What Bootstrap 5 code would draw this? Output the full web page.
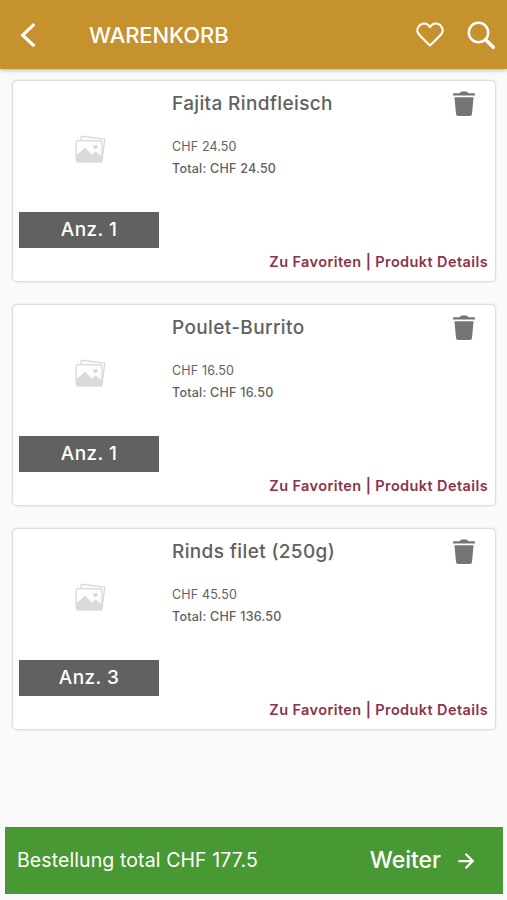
<!DOCTYPE html>
<html lang="de">
<head>
<meta charset="utf-8">
<meta name="viewport" content="width=device-width, initial-scale=1">
<title>Warenkorb</title>
<link href="https://cdn.jsdelivr.net/npm/bootstrap@5.3.0/dist/css/bootstrap.min.css" rel="stylesheet">
<style>
body{font-family:Inter,"Liberation Sans",sans-serif;background:#fafafa;color:#616161;height:900px;overflow:hidden}
.topbar{height:69px;background:#c5922e;box-shadow:0 1px 4px rgba(0,0,0,.32);padding:1px 11px 0 20px;flex:none}
.topbar h1{font-size:22px;font-weight:500;line-height:30px;letter-spacing:-.08px;margin-left:53px}
.items{padding:11px 11px 0 12px;gap:22px}
.item{height:202px;border:1px solid #dedede;border-radius:5px;box-shadow:0 0 2px rgba(0,0,0,.14);padding:7px 7px 7px 6px}
.thumb{width:140px;margin-right:13px}
.photo{height:124px;padding:0 0 2px 2px}
.qty{height:36px;background:#616161;font-size:19px;font-weight:500;line-height:36px;letter-spacing:.4px}
.name{font-size:19px;font-weight:500;line-height:28px;letter-spacing:.36px;padding-top:2px}
.price{font-size:12.5px;line-height:22px;letter-spacing:.15px;margin-top:18px}
.sum{font-size:12.5px;line-height:22px;font-weight:500;letter-spacing:.24px}
.actions{font-size:14.5px;line-height:20px;font-weight:600;letter-spacing:.4px;color:#8b3347;margin-bottom:2px}
.bin{margin:3px 13px 1px 0}
.total{height:67px;background:#489833;margin:0 4px 6px 5px;padding:0 28px 0 12px;flex:none}
.total-label{font-size:19.5px;letter-spacing:.1px;padding-top:1px}
.next{font-size:23px;font-weight:500;gap:16px}
</style>
<script src="https://cdn.jsdelivr.net/npm/bootstrap@5.3.0/dist/js/bootstrap.bundle.min.js"></script>
</head>
<body class="d-flex flex-column">
<svg class="d-none" xmlns="http://www.w3.org/2000/svg">
<symbol id="bin" viewBox="0 0 22 25"><path fill="#757575" d="M.8 2.2H6.6L8 .8Q8.300 .4 9 .4H13Q13.700 .4 14 .8L15.400 2.200H21.200Q22 2.200 22 3V4.400H0V3Q0 2.200 .8 2.200ZM1.500 6.200H20.500L19 23Q18.800 25 16.800 25H5.200Q3.200 25 3 23Z"/></symbol>
<symbol id="photos" viewBox="0 0 31 28"><path fill="#fff" stroke="#dadada" stroke-width="1.400" d="M5.500 6 6.300 1.200 29.800 4 27 25.500"/><rect x="1.200" y="5.700" width="25.800" height="21" rx="2" fill="#fff" stroke="#dadada" stroke-width="1.400"/><path fill="#dadada" d="M1 21 9 13.500Q10 12.500 11 13.500L16.500 19.500 19.500 17Q20.500 16 21.500 17L27.500 22V25.500Q27.500 27.400 25.500 27.400H3Q1 27.400 1 25.500Z"/><circle cx="20.500" cy="12" r="2.300" fill="#dadada"/></symbol>
</svg>
<header class="topbar d-flex align-items-center text-white">
<svg width="16" height="26" viewBox="0 0 16 26" fill="none" stroke="#fff" stroke-width="3.200"><path d="M14.300 2.200 2.700 13.200 14.300 24.200"/></svg>
<h1 class="mb-0">WARENKORB</h1>
<svg class="ms-auto" width="28" height="26" viewBox="0 0 28 26" fill="none" stroke="#fff" stroke-width="2" stroke-linejoin="round"><path d="M14 5.100C12 1.900 8.700 1 6.300 1.800C2 3.200.1 8 2.200 11.400C3.500 13.500 8.500 18.200 14 23.500C19.500 18.200 24.500 13.500 25.800 11.400C27.900 8 26 3.200 21.700 1.800C19.300 1 16 1.900 14 5.100Z"/></svg>
<svg style="margin-left:23px" width="29" height="29" viewBox="0 0 29 29" fill="none" stroke="#fff" stroke-linecap="round"><circle cx="11.500" cy="11.500" r="9.700" stroke-width="2.500"/><path d="M18.700 18.700 26.300 26.300" stroke-width="3.600"/></svg>
</header>
<main class="items d-flex flex-column flex-grow-1">
<article class="item bg-white d-flex">
<div class="thumb text-center"><div class="photo d-flex align-items-center justify-content-center"><svg width="31" height="28"><use href="#photos"/></svg></div><div class="qty text-white">Anz. 1</div></div>
<div class="d-flex flex-column flex-grow-1"><div class="d-flex justify-content-between align-items-start"><div class="name">Fajita Rindfleisch</div><svg class="bin" width="22" height="25"><use href="#bin"/></svg></div><div class="price">CHF 24.50</div><div class="sum">Total: CHF 24.50</div><div class="actions text-end mt-auto">Zu Favoriten | Produkt Details</div></div>
</article>
<article class="item bg-white d-flex">
<div class="thumb text-center"><div class="photo d-flex align-items-center justify-content-center"><svg width="31" height="28"><use href="#photos"/></svg></div><div class="qty text-white">Anz. 1</div></div>
<div class="d-flex flex-column flex-grow-1"><div class="d-flex justify-content-between align-items-start"><div class="name">Poulet-Burrito</div><svg class="bin" width="22" height="25"><use href="#bin"/></svg></div><div class="price">CHF 16.50</div><div class="sum">Total: CHF 16.50</div><div class="actions text-end mt-auto">Zu Favoriten | Produkt Details</div></div>
</article>
<article class="item bg-white d-flex">
<div class="thumb text-center"><div class="photo d-flex align-items-center justify-content-center"><svg width="31" height="28"><use href="#photos"/></svg></div><div class="qty text-white">Anz. 3</div></div>
<div class="d-flex flex-column flex-grow-1"><div class="d-flex justify-content-between align-items-start"><div class="name">Rinds filet (250g)</div><svg class="bin" width="22" height="25"><use href="#bin"/></svg></div><div class="price">CHF 45.50</div><div class="sum">Total: CHF 136.50</div><div class="actions text-end mt-auto">Zu Favoriten | Produkt Details</div></div>
</article>
</main>
<footer class="total d-flex align-items-center justify-content-between text-white">
<span class="total-label">Bestellung total CHF 177.5</span>
<span class="next d-flex align-items-center">Weiter<svg width="18" height="18" viewBox="0 0 19 20" fill="none" stroke="#fff" stroke-width="2.500"><path d="M1 10H16.500M9 2 17 10 9 18"/></svg></span>
</footer>
</body>
</html>
